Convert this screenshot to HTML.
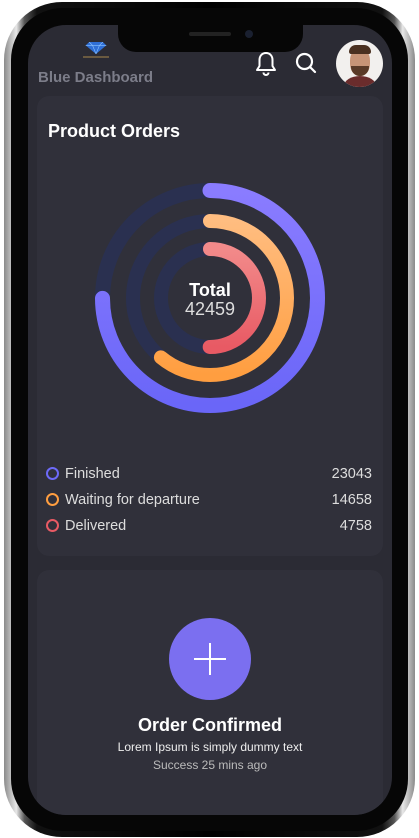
<!DOCTYPE html>
<html><head><style>
*{margin:0;padding:0;box-sizing:border-box}
body{width:419px;height:838px;background:#fff;overflow:hidden;position:relative;font-family:"Liberation Sans",sans-serif}
.phone{position:absolute;left:4px;top:2px;width:411px;height:835px;border-radius:58px;background:linear-gradient(90deg,#8a8a8a,#e8e8e8 3%,#555 5%,#111 8%,#000 50%,#111 92%,#555 95%,#e8e8e8 97%,#8a8a8a)}
.inner{position:absolute;left:7px;top:6px;right:7px;bottom:6px;border-radius:52px;background:#060606}
.screen{position:absolute;left:28px;top:25px;width:364px;height:790px;border-radius:38px;background:#2b2b34;overflow:hidden}
.notch{position:absolute;left:118px;top:25px;width:185px;height:27px;background:#060606;border-radius:0 0 18px 18px}
.card{position:absolute;left:9px;width:346px;background:#30303a;border-radius:12px}
.w{color:#fff}
</style></head><body>
<div class="phone"><div class="inner"></div></div>
<div class="screen">
  <svg style="position:absolute;left:57px;top:17px" width="22" height="12" viewBox="0 0 24 14"><path d="M4 0h16l4 4-12 10L0 4z" fill="#2f6fd6"/><path d="M4 0l4 4h8l4-4M0 4h24M8 4l4 10 4-10" stroke="#8cc4ff" stroke-width=".7" fill="none"/></svg>
  <div style="position:absolute;left:55px;top:31px;width:26px;height:2px;background:#6a5a40"></div>
  <div style="position:absolute;left:10px;top:44px;font-size:15px;font-weight:bold;color:#7c7d89">Blue Dashboard</div>
  <svg style="position:absolute;left:227px;top:25px" width="22" height="26" viewBox="0 0 22 26" fill="none" stroke="#fff" stroke-width="2"><path d="M11 3c-4 0-6.5 3-6.5 7v6L2 20h18l-2.5-4v-6c0-4-2.5-7-6.5-7z" stroke-linejoin="round"/><path d="M8.5 22.5a2.5 2.5 0 005 0"/></svg>
  <svg style="position:absolute;left:267px;top:27px" width="22" height="22" viewBox="0 0 22 22" fill="none" stroke="#fff" stroke-width="2.2"><circle cx="9.5" cy="9.5" r="7.5"/><path d="M15 15l5 5" stroke-linecap="round"/></svg>
  <div style="position:absolute;left:308px;top:15px;width:47px;height:47px;border-radius:50%;background:#f2f0ee;overflow:hidden">
    <div style="position:absolute;left:8px;top:36px;width:32px;height:20px;border-radius:50%;background:#6a2c2c"></div>
    <div style="position:absolute;left:14px;top:8px;width:20px;height:28px;border-radius:45%;background:#c79477"></div>
    <div style="position:absolute;left:13px;top:5px;width:22px;height:9px;border-radius:10px 10px 3px 3px;background:#4a3020"></div>
    <div style="position:absolute;left:15px;top:26px;width:18px;height:10px;border-radius:0 0 9px 9px;background:#5a3a28"></div>
  </div>
  <div class="card" style="top:71px;height:460px">
    <div class="w" style="position:absolute;left:11px;top:25px;font-size:18px;font-weight:bold">Product Orders</div>
    <svg style="position:absolute;left:50px;top:79px" width="246" height="246" viewBox="0 0 246 246">
      <defs>
        <linearGradient id="gp" x1="1" y1="0" x2="0" y2="0"><stop offset="0" stop-color="#8a7cff"/><stop offset="1" stop-color="#6a66f8"/></linearGradient>
        <linearGradient id="go" x1="1" y1="0" x2="0" y2="0"><stop offset="0" stop-color="#ffbd80"/><stop offset="1" stop-color="#ff9e40"/></linearGradient>
        <linearGradient id="gr" x1="1" y1="0" x2="0" y2="0"><stop offset="0" stop-color="#f28a8a"/><stop offset="1" stop-color="#e85a64"/></linearGradient>
      </defs>
      <g transform="rotate(-90 123 123)" fill="none" stroke-width="15" stroke-linecap="round">
        <circle cx="123" cy="123" r="107.5" stroke="#2a3050"/>
        <circle cx="123" cy="123" r="77" stroke="#2a3050" stroke-width="14"/>
        <circle cx="123" cy="123" r="49" stroke="#2a3050" stroke-width="14"/>
        <circle cx="123" cy="123" r="107.5" stroke="url(#gp)" stroke-dasharray="506 1000"/>
        <circle cx="123" cy="123" r="77" stroke="url(#go)" stroke-width="14" stroke-dasharray="295 1000"/>
        <circle cx="123" cy="123" r="49" stroke="url(#gr)" stroke-width="14" stroke-dasharray="154 1000"/>
      </g>
    </svg>
    <div class="w" style="position:absolute;left:0;width:346px;text-align:center;top:184px;font-size:18px;font-weight:bold">Total</div>
    <div style="position:absolute;left:0;width:346px;text-align:center;top:203px;font-size:18px;color:#ddd">42459</div>
    <div style="position:absolute;left:9px;top:365px;width:326px;font-size:14.5px;color:#ddd;line-height:26px">
      <div style="display:flex;justify-content:space-between"><span><i style="display:inline-block;width:13px;height:13px;border:2px solid #6d6af8;border-radius:50%;vertical-align:-2px;margin-right:6px"></i>Finished</span><span>23043</span></div>
      <div style="display:flex;justify-content:space-between"><span><i style="display:inline-block;width:13px;height:13px;border:2px solid #ff9e40;border-radius:50%;vertical-align:-2px;margin-right:6px"></i>Waiting for departure</span><span>14658</span></div>
      <div style="display:flex;justify-content:space-between"><span><i style="display:inline-block;width:13px;height:13px;border:2px solid #e85a64;border-radius:50%;vertical-align:-2px;margin-right:6px"></i>Delivered</span><span>4758</span></div>
    </div>
  </div>
  <div class="card" style="top:545px;height:260px">
    <div style="position:absolute;left:132px;top:48px;width:82px;height:82px;border-radius:50%;background:#7b6ff0"></div>
    <div style="position:absolute;left:157px;top:88px;width:32px;height:2px;background:#fff"></div>
    <div style="position:absolute;left:172px;top:73px;width:2px;height:32px;background:#fff"></div>
    <div class="w" style="position:absolute;left:0;width:346px;text-align:center;top:145px;font-size:18px;font-weight:bold">Order Confirmed</div>
    <div style="position:absolute;left:0;width:346px;text-align:center;top:170px;font-size:12px;color:#eee">Lorem Ipsum is simply dummy text</div>
    <div style="position:absolute;left:0;width:346px;text-align:center;top:188px;font-size:12px;color:#bbb">Success 25 mins ago</div>
  </div>
</div>
<div class="notch"><div style="position:absolute;left:71px;top:7px;width:42px;height:4px;border-radius:3px;background:#222"></div><div style="position:absolute;left:127px;top:5px;width:8px;height:8px;border-radius:50%;background:#1a2030"></div></div>
</body></html>
